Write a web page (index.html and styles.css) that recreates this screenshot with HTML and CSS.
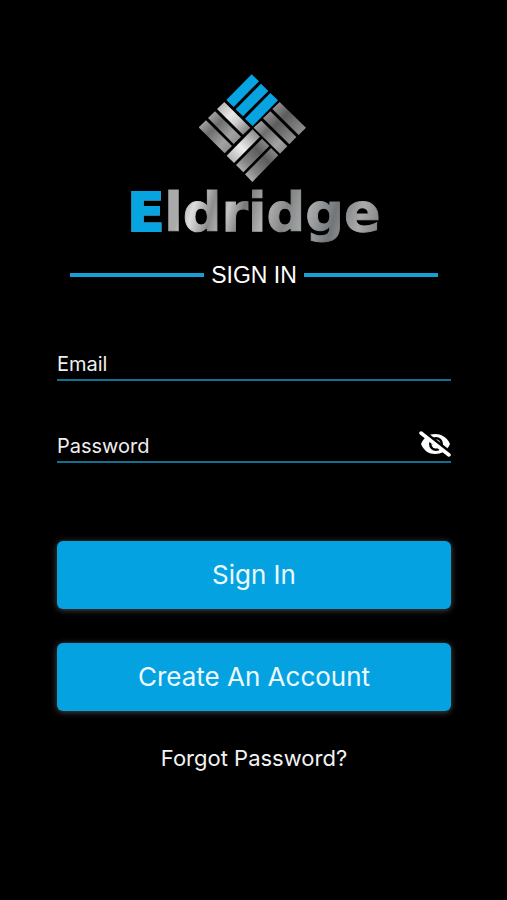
FILE: index.html
```html
<!DOCTYPE html>
<html lang="en">
<head>
  <meta charset="utf-8">
  <meta name="viewport" content="width=device-width, initial-scale=1">
  <title>Eldridge – Sign In</title>
  <link rel="stylesheet" href="styles.css">
</head>
<body>
  <main class="screen">
    <header class="brand">
      <svg class="mark" viewBox="26 25 330 330" aria-hidden="true">
        <defs>
          <linearGradient id="bright" x1="0" y1="0" x2="1" y2="1">
            <stop offset="0" stop-color="#a9a9a9"/>
            <stop offset=".4" stop-color="#e8e8e8"/>
            <stop offset=".6" stop-color="#cfcfcf"/>
            <stop offset="1" stop-color="#686868"/>
          </linearGradient>
          <linearGradient id="steel" x1="0" y1="0" x2="1" y2="1">
            <stop offset="0" stop-color="#b5b5b5"/>
            <stop offset=".35" stop-color="#6e6e6e"/>
            <stop offset=".7" stop-color="#a2a2a2"/>
            <stop offset="1" stop-color="#858585"/>
          </linearGradient>
          <linearGradient id="dark" x1="0" y1="0" x2="1" y2="1">
            <stop offset="0" stop-color="#a0a0a0"/>
            <stop offset=".4" stop-color="#5c5c5c"/>
            <stop offset="1" stop-color="#999"/>
          </linearGradient>
          <linearGradient id="rising" x1="0" y1="1" x2="1" y2="0">
            <stop offset="0" stop-color="#c4c4c4"/>
            <stop offset=".3" stop-color="#858585"/>
            <stop offset=".65" stop-color="#5c5c5c"/>
            <stop offset="1" stop-color="#969696"/>
          </linearGradient>
          <linearGradient id="shine" x1="0" y1="1" x2="1" y2="0">
            <stop offset="0" stop-color="#a5a5a5"/>
            <stop offset=".45" stop-color="#eee"/>
            <stop offset="1" stop-color="#777"/>
          </linearGradient>
        </defs>
        <g fill="#08a4e2">
          <path d="M108 106 184 29 206 50 130 127Z"/>
          <path d="M136 134 212 57 234 79 158 155Z"/>
          <path d="M164 162 240 85 263 107 187 184Z"/>
        </g>
        <g>
          <path fill="url(#bright)" d="M102 112 180 189 158 210 80 133Z"/>
          <path fill="url(#steel)" d="M74 140 152 216 130 238 53 160Z"/>
          <path fill="url(#steel)" d="M47 167 125 244 103 266 25 188Z"/>
          <path fill="url(#dark)" d="M268 112 347 189 325 211 246 133Z"/>
          <path fill="url(#dark)" d="M240 140 318 217 297 239 218 161Z"/>
          <path fill="url(#steel)" d="M213 168 291 245 269 267 190 189Z"/>
          <path fill="url(#shine)" d="M187 194 209 216 131 295 109 273Z"/>
          <path fill="url(#rising)" d="M215 222 237 244 159 323 137 301Z"/>
          <path fill="url(#rising)" d="M242 250 264 272 186 352 164 329Z"/>
        </g>
      </svg>
      <div class="wordmark"><span class="initial">E</span>ldridge</div>
    </header>

    <h1 class="title">SIGN IN</h1>

    <form class="form">
      <div class="field">
        <input class="input" type="email" placeholder="Email" aria-label="Email">
      </div>
      <div class="field">
        <input class="input" type="password" placeholder="Password" aria-label="Password">
        <button class="reveal" type="button" aria-label="Show password">
          <svg class="eye" viewBox="0 0 32 26" aria-hidden="true">
            <path fill="#fff" d="M2 13C5 6 10 3 16 3S28 6 31 13C28 20 22 23 16 23S5 20 2 13Z"/>
            <circle cx="17" cy="13" r="7" fill="#000"/>
            <circle cx="17" cy="13" r="4.5" fill="#fff"/>
            <circle cx="14.5" cy="11" r="2.5" fill="#000"/>
            <path stroke="#000" stroke-width="3" d="M4 0 32 22"/>
            <path stroke="#fff" stroke-width="3.5" stroke-linecap="round" d="M2 2 30 24"/>
          </svg>
        </button>
      </div>
      <div class="actions">
        <button class="button" type="submit">Sign In</button>
        <button class="button" type="button">Create An Account</button>
      </div>
    </form>

    <a class="forgot" href="#">Forgot Password?</a>
  </main>
</body>
</html>
```
FILE: styles.css
```css
* {
  box-sizing: border-box;
}

body {
  margin: 0;
  background: #000;
  color: #fff;
  font-family: Inter, "Liberation Sans", sans-serif;
}

.screen {
  display: flex;
  flex-direction: column;
  min-height: 100vh;
  padding: 73px 56px 48px 57px;
}

.brand {
  display: flex;
  flex-direction: column;
  align-items: center;
}

.mark {
  width: 110px;
  height: 110px;
}

.wordmark {
  font: bold 54px/60px "DejaVu Sans", sans-serif;
  background: linear-gradient(105deg, #aaa 22%, #ddd 27%, #8c8c8c 34%, #c4c4c4 40%, #777 46%, #b4b4b4 54%, #858585 62%, #a9adb0 70%, #737679 80%, #aaa 90%, #777 100%);
  background-clip: text;
  -webkit-background-clip: text;
  color: transparent;
  -webkit-text-stroke: 1px transparent;
}

.initial {
  color: #08a4e2;
  -webkit-text-stroke: 2px #08a4e2;
}

.title {
  display: flex;
  align-items: center;
  gap: 7px;
  margin: 20px 13px 0;
  font: 400 23px/24px "Liberation Sans", sans-serif;
}

.title::before,
.title::after {
  content: "";
  flex: 1;
  height: 4px;
  background: #159fd5;
}

.form {
  display: flex;
  flex-direction: column;
  gap: 42px;
  margin-top: 54px;
}

.field {
  display: flex;
  align-items: center;
  height: 40px;
  border-bottom: 2px solid #10708f;
}

.input {
  flex: 1;
  min-width: 0;
  height: 38px;
  padding: 8px 0 0;
  border: 0;
  outline: 0;
  background: none;
  color: #fff;
  font: 400 20px/24px Inter, sans-serif;
}

.input::placeholder {
  color: #eee;
  opacity: 1;
}

.reveal {
  display: flex;
  padding: 4px 0 0;
  border: 0;
  background: none;
}

.eye {
  width: 32px;
  height: 26px;
}

.actions {
  display: grid;
  gap: 34px;
  margin-top: 36px;
}

.button {
  height: 68px;
  border: 0;
  border-radius: 6px;
  background: #05a2e2;
  box-shadow: 0 1px 6px rgba(255, 255, 255, .3);
  color: #ecfaff;
  font: 400 26px/32px Inter, sans-serif;
}

.forgot {
  align-self: center;
  margin-top: 34px;
  color: #f2f2f2;
  font-size: 22px;
  line-height: 26px;
  text-decoration: none;
}
```
